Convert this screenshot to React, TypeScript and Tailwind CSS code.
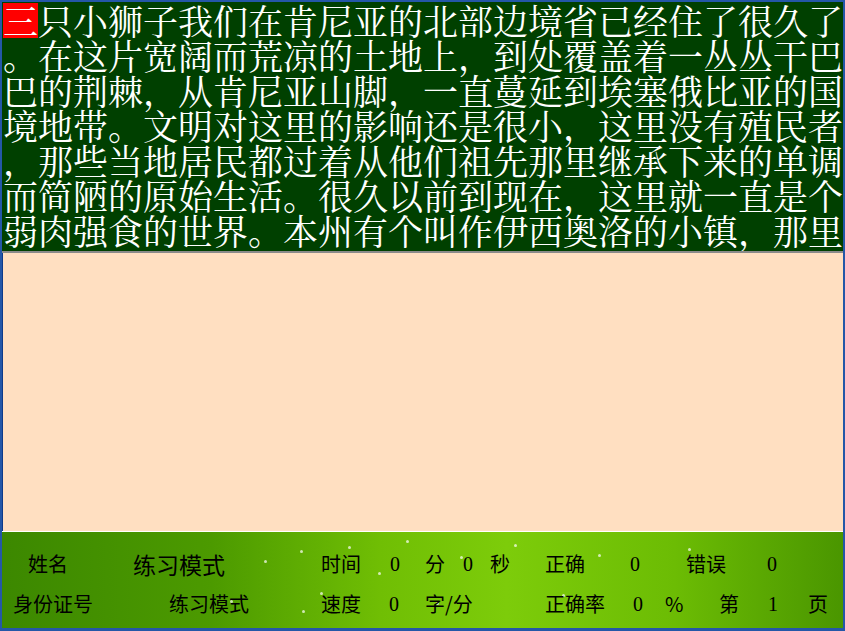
const lines = [
  "只小狮子我们在肯尼亚的北部边境省已经住了很久了",
  "。在这片宽阔而荒凉的土地上，到处覆盖着一丛丛干巴",
  "巴的荆棘，从肯尼亚山脚，一直蔓延到埃塞俄比亚的国",
  "境地带。文明对这里的影响还是很小，这里没有殖民者",
  "，那些当地居民都过着从他们祖先那里继承下来的单调",
  "而简陋的原始生活。很久以前到现在，这里就一直是个",
  "弱肉强食的世界。本州有个叫作伊西奥洛的小镇，那里",
];

const sparkles = [
  { x: 262, y: 28 }, { x: 298, y: 18 }, { x: 318, y: 60 }, { x: 346, y: 14 },
  { x: 376, y: 40 }, { x: 404, y: 8 }, { x: 458, y: 24 }, { x: 512, y: 12 },
  { x: 596, y: 22 }, { x: 686, y: 16 }, { x: 228, y: 68 }, { x: 560, y: 62 },
  { x: 300, y: 78 }, { x: 434, y: 70 },
];

const num = "font-['Liberation_Serif',serif]";

export default function App() {
  return (
    <div className="flex h-[631px] w-[845px] flex-col border-x-2 border-t-2 border-b-[3px] border-[#2457a8] bg-[#2457a8] font-['Noto_Sans_CJK_SC',sans-serif]">
      <div className="h-[249px] bg-[#004000] pl-[1px] pt-[1px] font-['Noto_Serif_CJK_SC','Noto_Sans_CJK_SC',serif] text-[35px] leading-[35px] text-white">
        {lines.map((line, i) => (
          <div key={i} className="h-[35px] whitespace-nowrap">
            {i === 0 && (
              <span className="inline-block h-[35px] w-[35px] bg-[#ff0000] align-top">三</span>
            )}
            {line}
          </div>
        ))}
      </div>
      <div className="h-[2px] bg-[#8a8a8a]" />
      <div className="h-[278px] border-l border-[#0c3a8a] bg-[#ffdfc1]" />
      <div className="h-px bg-white" />
      <div className="relative flex-1 overflow-hidden bg-[linear-gradient(90deg,#3c8800_0%,#4c9a00_25%,#70be04_45%,#7dcc0a_60%,#6cbc04_80%,#4a9600_100%)] pt-[12px] text-[20px] leading-[40px] text-black">
        {sparkles.map((s, i) => (
          <span
            key={i}
            className="absolute h-[3px] w-[3px] rounded-full bg-white/70"
            style={{ left: s.x, top: s.y }}
          />
        ))}
        <div className="relative flex h-[40px] pl-[26px] whitespace-nowrap">
          <span className="w-[105px]">姓名</span>
          <span className="w-[188px] text-[23px]">练习模式</span>
          <span className="w-[69px]">时间</span>
          <span className={`w-[35px] ${num}`}>0</span>
          <span className="w-[38px]">分</span>
          <span className={`w-[27px] ${num}`}>0</span>
          <span className="w-[55px]">秒</span>
          <span className="w-[85px]">正确</span>
          <span className={`w-[56px] ${num}`}>0</span>
          <span className="w-[81px]">错误</span>
          <span className={num}>0</span>
        </div>
        <div className="relative flex h-[40px] pl-[11px] whitespace-nowrap">
          <span className="w-[156px]">身份证号</span>
          <span className="w-[152px]">练习模式</span>
          <span className="w-[68px]">速度</span>
          <span className={`w-[36px] ${num}`}>0</span>
          <span className="w-[120px]">字/分</span>
          <span className="w-[88px]">正确率</span>
          <span className={`w-[32px] ${num}`}>0</span>
          <span className="w-[54px]">%</span>
          <span className="w-[49px]">第</span>
          <span className={`w-[40px] ${num}`}>1</span>
          <span>页</span>
        </div>
      </div>
    </div>
  );
}
